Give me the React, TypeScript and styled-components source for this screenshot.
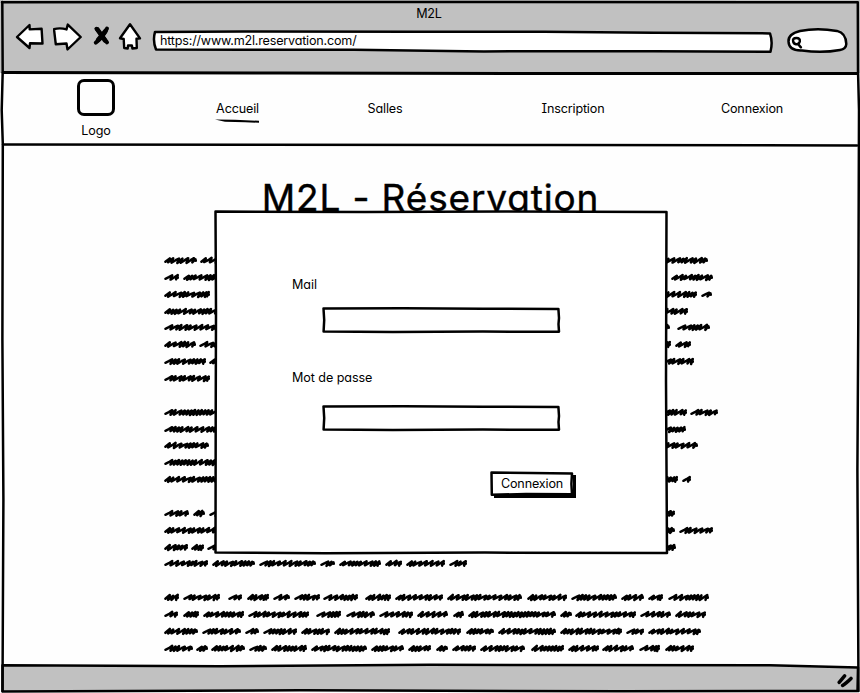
import React from "react";
import styled, { createGlobalStyle } from "styled-components";

const GlobalStyle = createGlobalStyle`
  * { box-sizing: border-box; }
  body { margin: 0; background: #fff; overflow: hidden; }
`;

const Window = styled.div`
  position: relative;
  display: flex;
  flex-direction: column;
  width: 860px;
  height: 693px;
  overflow: hidden;
  background: #fefefe;
  color: #000;
  font-family: Inter, "Open Sans", sans-serif;
  font-size: 12.6px;
  letter-spacing: -0.17px;
  line-height: 16px;
  font-feature-settings: "cv11" 1, "cv08" 1;
`;

const Outline = styled.svg`
  position: absolute;
  inset: 0;
  width: 100%;
  height: 100%;
  overflow: visible;
  pointer-events: none;
  fill: none;
  stroke: #000;
  stroke-width: 2.5;
  stroke-linejoin: round;
  stroke-linecap: round;
`;

const Toolbar = styled.header`
  display: flex;
  flex-direction: column;
  height: 73px;
  background: #c1c1c1;
`;

const WindowTitle = styled.div`
  padding: 6px 2px 0 0;
  height: 22px;
  text-align: center;
`;

const Controls = styled.div`
  display: flex;
  align-items: flex-start;
  padding-left: 15px;
`;

const NavIcon = styled.svg<{ $gap: number }>`
  flex: none;
  margin-right: ${(p) => p.$gap}px;
  fill: #fff;
  stroke: #000;
  stroke-width: 2.4;
  stroke-linejoin: round;
  stroke-linecap: round;
`;

const AddressBar = styled.div`
  position: relative;
  width: 618px;
  height: 21px;
  margin: 9px 16px 0 0;
  padding: 2px 0 0 6px;
  letter-spacing: -0.2px;
`;

const Layered = styled.span`
  position: relative;
`;

const SearchBox = styled.div`
  position: relative;
  width: 60px;
  height: 24px;
  margin-top: 7px;
`;

const SiteNav = styled.nav`
  display: grid;
  grid-template-columns: 192px 91px 204px 172px 186px;
  height: 72px;
`;

const LogoItem = styled.div`
  display: flex;
  flex-direction: column;
  align-items: center;
  padding-top: 6px;
`;

const LogoBox = styled.div`
  width: 38px;
  height: 37px;
  margin-bottom: 7px;
  border: 3px solid #000;
  border-radius: 7px;
`;

const NavLink = styled.a`
  display: flex;
  flex-direction: column;
  align-items: center;
  padding-top: 28px;
`;

const Underline = styled.svg`
  display: block;
  margin-top: 2px;
`;

const Content = styled.main`
  flex: 1;
  display: flex;
  flex-direction: column;
  padding-left: 164px;
`;

const Heading = styled.h1`
  width: 533px;
  margin: 30px 0 0;
  text-align: center;
  font-size: 37px;
  line-height: 46px;
  font-weight: 400;
  letter-spacing: 0.85px;
  -webkit-text-stroke: 0.4px #000;
`;

const Copy = styled.div`
  display: grid;
  grid-auto-rows: 16.87px;
  margin-top: 31px;
`;

const Line = styled.svg`
  display: block;
  width: 560px;
  height: 16.87px;
  overflow: visible;
  fill: none;
  stroke: #000;
  stroke-width: 2.5;
  stroke-linecap: round;
  stroke-linejoin: round;
`;

const StatusBar = styled.footer`
  display: flex;
  justify-content: flex-end;
  height: 28px;
  padding: 8px 5px 0 0;
`;

const Modal = styled.form`
  position: absolute;
  left: 215px;
  top: 211px;
  width: 452px;
  height: 342px;
  display: flex;
  flex-direction: column;
  background: #fff;
  padding: 66px 94px 0 77px;
`;

const Label = styled.label`
  position: relative;
  height: 16px;
  letter-spacing: -0.08px;
`;

const Field = styled.div<{ $before: number; $after: number }>`
  position: relative;
  flex: none;
  width: 236px;
  height: 24px;
  margin: ${(p) => p.$before}px 0 ${(p) => p.$after}px 31px;
`;

const Submit = styled.button`
  position: relative;
  align-self: flex-end;
  width: 82px;
  height: 23px;
  padding: 0;
  border: 0;
  background: #fff;
  color: #000;
  font: inherit;
  letter-spacing: inherit;
  font-feature-settings: inherit;
  line-height: 23px;
  text-align: center;
  box-shadow: 3px 3px 0 #000;
`;

type Word = [number, number];

const lines: Word[][] = [
  [[164, 197], [200, 230], [650, 708]],
  [[164, 179], [183, 230], [671, 713]],
  [[164, 210], [650, 697], [701, 712]],
  [[164, 230], [650, 688]],
  [[164, 230], [650, 670], [677, 710]],
  [[164, 196], [199, 230], [650, 671], [675, 691]],
  [[164, 206], [209, 230], [650, 694]],
  [[164, 210]],
  [],
  [[164, 230], [650, 687], [690, 718]],
  [[164, 230], [650, 686]],
  [[164, 209], [650, 698]],
  [[164, 230]],
  [[164, 230], [650, 678], [682, 691]],
  [],
  [[164, 189], [193, 205], [209, 230], [650, 675]],
  [[164, 230], [650, 675], [679, 713]],
  [[164, 188], [191, 204], [207, 230], [650, 676]],
  [[164, 208], [212, 255], [259, 316], [320, 335], [339, 381], [385, 402], [406, 445], [449, 467]],
  [],
  [[164, 179], [183, 220], [228, 242], [247, 269], [273, 290], [294, 320], [323, 358], [365, 391], [395, 443], [447, 522], [527, 567], [571, 617], [621, 644], [648, 663], [668, 709]],
  [[164, 178], [183, 199], [203, 244], [248, 309], [316, 341], [346, 375], [379, 413], [417, 448], [453, 464], [468, 556], [560, 572], [575, 636], [640, 671], [675, 706]],
  [[164, 198], [202, 241], [245, 259], [263, 297], [301, 330], [334, 390], [398, 461], [466, 494], [498, 556], [560, 622], [626, 644], [648, 701]],
  [[164, 193], [196, 208], [211, 245], [249, 267], [271, 307], [311, 367], [371, 404], [408, 431], [436, 448], [452, 476], [480, 525], [531, 564], [568, 599], [602, 634], [639, 660], [665, 694]],
];

// Builds one slanted scribble; the seed varies the spacing of its loops.
function scribble([from, to]: Word, seed: number): string {
  let x = from - 162.6;
  const end = to - 165.2;
  let s = (seed * 7919 + from * 104729) % 65521;
  const rnd = () => {
    s = (s * 17364 + 1) % 65521;
    return s / 65521;
  };
  let d = `M${x} 9.8`;
  while (x < end - 3.2) {
    const wide = rnd() > 0.55;
    x = Math.min(x + (wide ? 5.8 : 3.4), end - 1);
    const top = 5.9 + rnd() * 0.9;
    if (wide) {
      d += `L${(x - 2.4).toFixed(1)} 8.2`;
    }
    d += `L${(x + 1).toFixed(1)} ${top.toFixed(1)}L${(x - 0.7).toFixed(1)} ${(10.1 + rnd() * 0.9).toFixed(1)}`;
  }
  return d + `L${end - 1.5} 8.4L${end - 0.3} 7.4L${end} 8.8`;
}

const inputOutline = "M0.5 0.5L80 0.3L160 0.8L235.4 0.9L236 10L235.5 16L236 23.8L160 23.6L70 24.1L0.6 23.5L1.2 12Z";

export default function App() {
  return (
    <>
      <GlobalStyle />
      <Window>
        <Toolbar>
          <WindowTitle>M2L</WindowTitle>
          <Controls>
            <NavIcon $gap={8} width="30" height="30" viewBox="0 0 30 30">
              <path d="M2 15L14.5 3L14.7 7.4L26.6 6.8L27.5 21.5L15 21.3L14.5 26Z" />
            </NavIcon>
            <NavIcon $gap={9} width="30" height="30" viewBox="0 0 30 30">
              <path d="M1 7.2Q7 5.5 13.5 7.4L14.8 2.6L27.7 15L14.5 27.5L13.5 21.5L2.8 22.3Z" />
            </NavIcon>
            <NavIcon $gap={8} width="18" height="30" viewBox="0 0 18 30">
              <path d="M4.4 6.8C8 11 12 16 15 20.4M15 6.5C12.5 12 9 17 3.8 20.6" strokeWidth="4" fill="none" />
              <path d="M5.5 7.5L13 18.5M13.5 9L6 18" strokeWidth="4.6" fill="none" />
            </NavIcon>
            <NavIcon $gap={12} width="24" height="30" viewBox="0 0 24 30">
              <path d="M12 2.2L2 16.3L5.7 17L6.2 26L9.7 26.5L10 23.5L13.9 23.5L14.4 26.5L18.8 26L18.5 16.8L22 16.4Z" />
            </NavIcon>
            <AddressBar>
              <Outline>
                <path
                  fill="#fff"
                  d="M1 0.9L90 0.4L260 0.8L390 0.8L500 1.8L616 2.4Q619 11 616.5 20.7L500 20.2L330 20.4L200 18.8L90 18.7L2 18.4Q-1.5 10 1 0.9Z"
                />
              </Outline>
              <Layered>https://www.m2l.reservation.com/</Layered>
            </AddressBar>
            <SearchBox>
              <Outline>
                <path
                  fill="#fff"
                  d="M12 2Q29 -1.4 49 1.9Q58 4 58.3 15Q58 20 52 21Q34 24.4 14 21.5Q1 22 0.5 12.5Q0 5 12 2Z"
                />
                <path d="M5.2 12.5Q4.2 9 8.4 9Q12.3 9 11.8 12.5Q11 15.6 8 15.2Q5.5 14.6 5.2 12.5ZM10 15L12.9 18.3" />
              </Outline>
            </SearchBox>
          </Controls>
        </Toolbar>
        <SiteNav>
          <LogoItem>
            <LogoBox />
            Logo
          </LogoItem>
          <NavLink>
            Accueil
            <Underline width="46" height="5" viewBox="0 0 46 5">
              <path d="M0 0.6L20 0.7L44 1.8L44 3.8L30 3.3L10 2.8Z" />
            </Underline>
          </NavLink>
          <NavLink>Salles</NavLink>
          <NavLink>Inscription</NavLink>
          <NavLink>Connexion</NavLink>
        </SiteNav>
        <Content>
          <Heading>M2L - Réservation</Heading>
          <Copy>
            {lines.map((words, i) => (
              <Line key={i}>
                {words.map((word, j) => (
                  <path key={j} d={scribble(word, i + j + 1)} />
                ))}
              </Line>
            ))}
          </Copy>
        </Content>
        <Outline>
          <path
            fill="#c1c1c1"
            d="M2.5 665.2L220 666.3L430 664.8L770 665.2L858 667.6L857.5 691L620 691.3L300 690.3L2.5 691.5Z"
          />
          <path d="M2 2.3L430 2L857.8 2.3L858 70L859 110L858.3 320L857.4 470L858.5 691" />
          <path d="M2.3 2L2.7 72L1.7 110L2.8 144L2.4 340L3.4 500L2.5 691" />
          <path strokeWidth="3" d="M3 72.5L280 73L580 73.5L857 73.5" />
          <path d="M3 144.5L260 144.8L550 145L857 145.4" />
        </Outline>
        <StatusBar>
          <Layered>
            <svg width="18" height="16" viewBox="0 0 18 16">
              <path d="M2.2 9.3L7.6 2.8M5.6 12.4Q9 10.4 14 5.4" fill="none" stroke="#000" strokeWidth="3.5" strokeLinecap="round" />
            </svg>
          </Layered>
        </StatusBar>
        <Modal onSubmit={(e) => e.preventDefault()}>
          <Outline>
            <path d="M0.5 0.5L150 1L290 0.5L451.5 1L451 170L452 342L270 341.6L110 342.3L0.5 341.5L0.7 210L1 100Z" />
          </Outline>
          <Label>Mail</Label>
          <Field $before={15} $after={38}>
            <Outline><path d={inputOutline} /></Outline>
          </Field>
          <Label>Mot de passe</Label>
          <Field $before={20} $after={42}>
            <Outline><path d={inputOutline} /></Outline>
          </Field>
          <Submit>
            <Outline>
              <path d="M0.5 0.5L40 1L81 1.4L80.4 12L81 22.3L35 22L0.8 22.8Z" />
            </Outline>
            <Layered>Connexion</Layered>
          </Submit>
        </Modal>
      </Window>
    </>
  );
}
